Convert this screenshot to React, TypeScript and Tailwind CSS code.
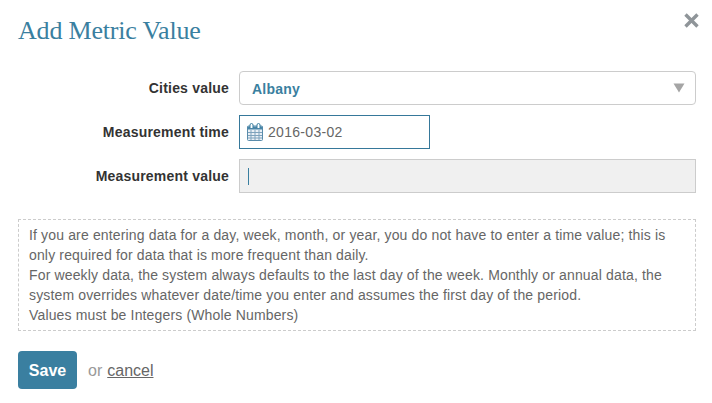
const labelClass = "w-[221px] pr-[10px] text-right text-[14px] font-bold text-[#333333] tracking-[0.2px]";

function CalendarIcon() {
  return (
    <svg width="17" height="18" viewBox="0 0 17 18" className="shrink-0">
      <rect x="0.5" y="3" width="15" height="14.5" rx="1" fill="#eaf0f6" stroke="#5a8cab" />
      <path d="M0.5 3.5h15v3h-15z" fill="#4a86a8" />
      <path
        d="M1 9.5h14M1 12.5h14M1 15h14M4 7v10M8 7v10M12 7v10"
        stroke="#7fa3bd"
        strokeWidth="1"
        fill="none"
      />
      <path d="M3 5V2a1.5 1.5 0 0 1 3 0v3" fill="#fff" stroke="#3a7fa0" />
      <path d="M10 5V2a1.5 1.5 0 0 1 3 0v3" fill="#fff" stroke="#3a7fa0" />
    </svg>
  );
}

export default function App() {
  return (
    <div className="relative h-[403px] w-[712px] overflow-hidden bg-white font-['Liberation_Sans',Arial,sans-serif]">
      <button type="button" className="absolute left-[683px] top-[12px] text-[#8f9599]">
        <svg width="17" height="17" viewBox="0 0 17 17">
          <path d="M2.5 2.5l12 12M14.5 2.5l-12 12" stroke="currentColor" strokeWidth="3.4" fill="none" />
        </svg>
      </button>

      <div className="flex flex-col pl-[18px] pr-[16px] pt-[16px]">
        <h1 className="h-[29px] font-['Liberation_Serif',serif] text-[26px] leading-[29px] tracking-[-0.2px] text-[#3a7fa0]">
          Add Metric Value
        </h1>

        <div className="mt-[26px] flex flex-col gap-[10px]">
          <div className="flex items-center">
            <label className={labelClass}>Cities value</label>
            <div className="flex h-[34px] flex-1 items-center justify-between rounded-[4px] border border-[#cccccc] bg-white pl-[12px] pr-[10px]">
              <span className="pt-[2px] text-[14px] font-bold tracking-[0.2px] text-[#3a7fa0]">Albany</span>
              <svg width="12" height="10" viewBox="0 0 12 10">
                <path d="M0.5 0.5h11L6 9.5z" fill="#a5a5a5" />
              </svg>
            </div>
          </div>

          <div className="flex items-center">
            <label className={labelClass}>Measurement time</label>
            <div className="flex h-[34px] w-[191px] items-center gap-[4px] border border-[#36789a] bg-white pl-[7px]">
              <CalendarIcon />
              <span className="text-[14px] tracking-[0.3px] text-[#666666]">2016-03-02</span>
            </div>
          </div>

          <div className="flex items-center">
            <label className={labelClass}>Measurement value</label>
            <div className="flex h-[34px] flex-1 items-center border border-[#cccccc] bg-[#f0f0f0] pl-[8px]">
              <span className="h-[17px] w-px bg-[#3a7fa0]" />
            </div>
          </div>
        </div>

        <div className="mt-[26px] h-[112px] border border-dashed border-[#cccccc] px-[10px] pt-[5px] text-[14px] leading-[20px] tracking-[0.15px] text-[#666666]">
          <p>
            If you are entering data for a day, week, month, or year, you do not have to enter a time value; this is
            only required for data that is more frequent than daily.
          </p>
          <p>
            For weekly data, the system always defaults to the last day of the week. Monthly or annual data, the
            system overrides whatever date/time you enter and assumes the first day of the period.
          </p>
          <p>Values must be Integers (Whole Numbers)</p>
        </div>

        <div className="mt-[20px] flex items-center">
          <button type="button" className="h-[38px] w-[59px] rounded-[4px] bg-[#3a7fa0] pt-[1px] text-[16px] font-bold text-white">
            Save
          </button>
          <span className="ml-[11px] pt-[1px] text-[16px] text-[#999999]">or</span>
          <a href="#" className="ml-[5px] pt-[1px] text-[16px] text-[#666666] underline">
            cancel
          </a>
        </div>
      </div>
    </div>
  );
}
